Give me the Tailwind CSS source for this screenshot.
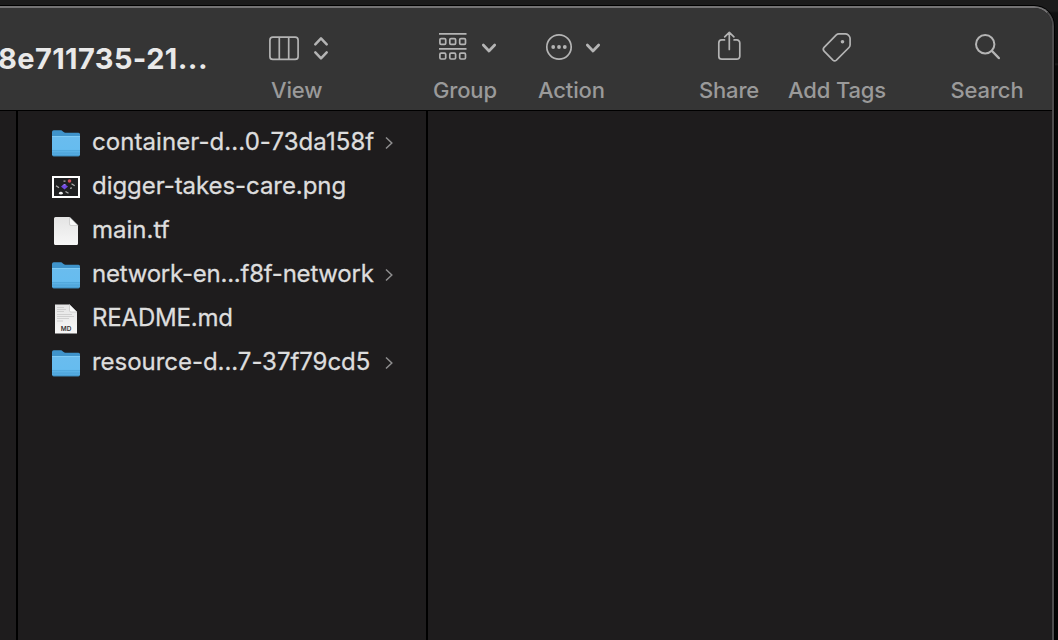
<!DOCTYPE html>
<html lang="en">
<head>
<meta charset="utf-8">
<title>Finder</title>
<script src="https://cdn.jsdelivr.net/npm/@tailwindcss/browser@4"></script>
</head>
<body class="w-[1058px] h-[640px] overflow-hidden bg-[linear-gradient(#1b1b1b_0px,#1b1b1b_11px,#101010_13px,#0c0c0c_63px,#1c1c1c_64px,#080808_66px,#040404_100%)] pt-[6px] font-['Inter','Liberation_Sans',sans-serif]">
<svg class="absolute w-0 h-0">
  <defs>
    <linearGradient id="fold" x1="0" y1="0" x2="0" y2="1"><stop offset="0" stop-color="#6abcee"/><stop offset="0.65" stop-color="#66bcef"/><stop offset="1" stop-color="#4fa6dc"/></linearGradient>
    <linearGradient id="page" x1="0" y1="0" x2="0" y2="1"><stop offset="0" stop-color="#e4e4e4"/><stop offset="1" stop-color="#f7f7f7"/></linearGradient>
    <symbol id="folder" viewBox="0 0 28 28">
      <path d="M0 3a1.700 1.700 0 0 1 1.700-1.700H8.500c1 0 1.500.3 2.100.9l1 .9c.5.5 1 .7 1.800.7H26.500A1.500 1.500 0 0 1 28 5.300V15H0z" fill="#3f93ca"/>
      <path d="M0 7.200h28V25.500A1.700 1.700 0 0 1 26.300 27.200H1.700A1.700 1.700 0 0 1 0 25.500z" fill="url(#fold)"/>
      <path d="M0 7.500h28" stroke="#7fcbf5" stroke-width="1"/>
      <path d="M0 21.700h28M0 24h28" stroke="#4a9fd4" stroke-width=".8"/>
      <path d="M.8 26.800h26.400" stroke="#3e8fc4" stroke-width=".8"/>
    </symbol>
    <symbol id="next" viewBox="0 0 10 14"><path d="M2 1.500 7.800 7 2 12.500" fill="none" stroke="#8e8d8e" stroke-width="1.500"/></symbol>
    <symbol id="down" viewBox="0 0 16 12"><path d="M2.300 3 8 9 13.700 3" fill="none" stroke="#b4b4b4" stroke-width="2.700" stroke-linecap="round" stroke-linejoin="round"/></symbol>
  </defs>
</svg>
<div class="w-[1054px] h-[634px] rounded-tr-[20px] bg-[#1e1c1d] border-t-2 border-r-2 border-t-[#747374] border-r-[#4d4c4d] shadow-[0_0_0_1px_#000] overflow-hidden flex flex-col">
  <header class="h-[103px] shrink-0 bg-[#353535] border-b border-black flex text-[22px] leading-[28px] font-medium text-[#9a9a9a] tracking-[-0.15px] whitespace-nowrap">
    <h1 class="w-[269px] shrink-0 pt-[32px] -ml-[2px] text-[29px] leading-[37px] font-bold text-[#e9e9e9] tracking-[0.4px]">8e711735-21...</h1>
    <div class="w-[62px] shrink-0 flex flex-col">
      <div class="h-[68px] pt-[26px] flex">
        <svg class="w-[64px] h-[30px] shrink-0" viewBox="267 34 64 30" fill="none" stroke="#b4b4b4" stroke-width="1.700">
          <rect x="269.900" y="37.200" width="28.200" height="22.200" rx="3"/><path d="M279.300 37v22.500M288.700 37v22.500"/>
          <path d="M315.300 44.300 321 38.300 326.700 44.300M315.300 52.300 321 58.300 326.700 52.300" stroke-width="2.500" stroke-linecap="round" stroke-linejoin="round"/>
        </svg>
      </div>
      <span class="pl-[4px]">View</span>
    </div>
    <div class="ml-[105px] w-[64px] shrink-0 flex flex-col">
      <div class="h-[68px] pt-[24px] flex gap-[13px]">
        <svg class="w-[34px] h-[30px] shrink-0" viewBox="434 32 34 30" fill="none" stroke="#b4b4b4" stroke-width="1.700">
          <path d="M439 33.900h27.500M439 48.800h27.500"/>
          <rect x="439.900" y="38.600" width="5.800" height="5.800" rx="1.200"/><rect x="449.800" y="38.600" width="5.800" height="5.800" rx="1.200"/><rect x="459.700" y="38.600" width="5.800" height="5.800" rx="1.200"/>
          <rect x="439.900" y="53.200" width="5.800" height="5.800" rx="1.200"/><rect x="449.800" y="53.200" width="5.800" height="5.800" rx="1.200"/><rect x="459.700" y="53.200" width="5.800" height="5.800" rx="1.200"/>
        </svg>
        <svg class="w-[16px] h-[12px] mt-[10px] shrink-0"><use href="#down"/></svg>
      </div>
      <span class="-ml-px">Group</span>
    </div>
    <div class="ml-[41px] w-[66px] shrink-0 flex flex-col">
      <div class="h-[68px] pt-[24px] pl-[6px] flex gap-[12px]">
        <svg class="w-[28px] h-[30px] shrink-0" viewBox="545 32 28 30"><circle cx="559" cy="47" r="12.200" fill="none" stroke="#b4b4b4" stroke-width="1.700"/><g fill="#b4b4b4"><circle cx="553.200" cy="47" r="1.900"/><circle cx="559" cy="47" r="1.900"/><circle cx="564.800" cy="47" r="1.900"/></g></svg>
        <svg class="w-[16px] h-[12px] mt-[10px] shrink-0"><use href="#down"/></svg>
      </div>
      <span class="-ml-px">Action</span>
    </div>
    <div class="ml-[94px] w-[60px] shrink-0 flex flex-col items-center">
      <div class="h-[68px] pt-[22px]">
        <svg class="w-[30px] h-[34px]" viewBox="714 30 30 34" fill="none" stroke="#b4b4b4" stroke-width="1.700" stroke-linecap="round" stroke-linejoin="round"><path d="M724.500 39.900h-2.700a3 3 0 0 0-3 3v13.300a3 3 0 0 0 3 3h15a3 3 0 0 0 3-3V42.900a3 3 0 0 0-3-3h-2.700M729.300 49.500V32.500M724.700 36.800l4.600-4.500 4.600 4.500"/></svg>
      </div>
      <span>Share</span>
    </div>
    <div class="ml-[29px] w-[98px] shrink-0 flex flex-col items-center">
      <div class="h-[68px] pt-[22px]">
        <svg class="w-[34px] h-[34px]" viewBox="820 30 34 34" fill="none" stroke="#b4b4b4" stroke-width="1.700" stroke-linejoin="round"><path d="M836.300 34.800Q837.400 33.800 838.900 33.800H845.300Q847 33.800 848.100 34.900L849.100 36Q850.100 37.100 850.100 38.700V44.800Q850.100 46.400 849 47.500L836.400 60.100Q834.600 61.700 832.900 60.100L824.100 51.100Q822.400 49.300 824.100 47.300Z"/><circle cx="842.500" cy="41.700" r="1.800" fill="#b4b4b4" stroke="none"/></svg>
      </div>
      <span>Add Tags</span>
    </div>
    <div class="ml-[64px] w-[74px] shrink-0 flex flex-col items-center">
      <div class="h-[68px] pt-[22px]">
        <svg class="w-[34px] h-[34px]" viewBox="970 30 34 34" fill="none" stroke="#b4b4b4" stroke-width="2" stroke-linecap="round"><circle cx="985.200" cy="44.200" r="9.200"/><path d="M992 51 998.800 58" stroke-width="2.500"/></svg>
      </div>
      <span>Search</span>
    </div>
  </header>
  <main class="flex-1 flex">
    <div class="w-[18px] shrink-0 border-r-2 border-black"></div>
    <ul class="w-[410px] shrink-0 border-r-2 border-black pt-[9px] text-[24px] leading-[44px] text-[#dddddd] whitespace-nowrap [-webkit-text-stroke:0.3px_#dddddd]">
      <li class="h-[44px] flex items-center pl-[34px]"><svg class="w-[28px] h-[28px] mt-[2px] mr-[12px]"><use href="#folder"/></svg><span class="w-[292px] tracking-[0.07px]">container-d...0-73da158f</span><svg class="w-[10px] h-[14px] mt-[2px]"><use href="#next"/></svg></li>
      <li class="h-[44px] flex items-center pl-[34px]">
        <svg class="w-[28px] h-[22px] mt-[2px] mr-[12px]" viewBox="0 0 28 22"><path fill="#fff" d="M0 0h28v22H0z"/><path fill="#1f1f21" d="M2 2h24v18H2z"/><path d="m9 10.500 3.500-2.500 3.500 2.500-3.500 3z" fill="#7048e0"/><path d="M10 9.500 12.500 8l2 1z" fill="#a386f5"/><circle cx="17.500" cy="5" r="1.800" fill="#cf4c56"/><path d="m4 9.800 3 2M19.500 7.800l3.200 2M13.500 15.500l3 1.700M11.500 5.200h2M18 12.300l2-.4" stroke="#aaa" stroke-width="1.300"/><ellipse cx="8.900" cy="17.200" rx="1.900" ry="1.400" fill="#eee"/></svg><span class="tracking-[-0.06px]">digger-takes-care.png</span></li>
      <li class="h-[44px] flex items-center pl-[34px]">
        <svg class="w-[28px] h-[28px] mt-[2px] mr-[12px]" viewBox="0 0 28 28"><path d="M3.500 0H17.500L26 8.500V26.500A1.500 1.500 0 0 1 24.500 28H3.500A1.500 1.500 0 0 1 2 26.500V1.500A1.500 1.500 0 0 1 3.500 0z" fill="url(#page)"/><path d="M17.500 0 26 8.500h-7a1.500 1.500 0 0 1-1.500-1.500z" fill="#fafafa" stroke="#bbb" stroke-width=".6"/></svg><span>main.tf</span></li>
      <li class="h-[44px] flex items-center pl-[34px]"><svg class="w-[28px] h-[28px] mt-[2px] mr-[12px]"><use href="#folder"/></svg><span class="w-[292px] tracking-[-0.22px]">network-en...f8f-network</span><svg class="w-[10px] h-[14px] mt-[2px]"><use href="#next"/></svg></li>
      <li class="h-[44px] flex items-center pl-[34px]">
        <svg class="w-[28px] h-[30px] mt-[2px] mr-[12px]" viewBox="0 0 28 30"><path d="M3 .5H17.500L25 8V29.500H3z" fill="url(#page)"/><path d="M17.500.5 25 8h-6a1.500 1.500 0 0 1-1.500-1.500z" fill="#fafafa" stroke="#bbb" stroke-width=".6"/><path d="M5 3.500h7M5 5.500h9M5 7.500h7M5 10.500h15M5 12.500h17M5 14.500h12M5 17h6" stroke="#c8c8c8" stroke-width=".8"/><text x="14" y="26.600" text-anchor="middle" font-size="6.400" font-weight="600" fill="#333" stroke="none" class="[-webkit-text-stroke:0px]">MD</text></svg><span class="tracking-[-0.18px]">README.md</span></li>
      <li class="h-[44px] flex items-center pl-[34px]"><svg class="w-[28px] h-[28px] mt-[2px] mr-[12px]"><use href="#folder"/></svg><span class="w-[292px] tracking-[-0.04px]">resource-d...7-37f79cd5</span><svg class="w-[10px] h-[14px] mt-[2px]"><use href="#next"/></svg></li>
    </ul>
  </main>
</div>
</body>
</html>
